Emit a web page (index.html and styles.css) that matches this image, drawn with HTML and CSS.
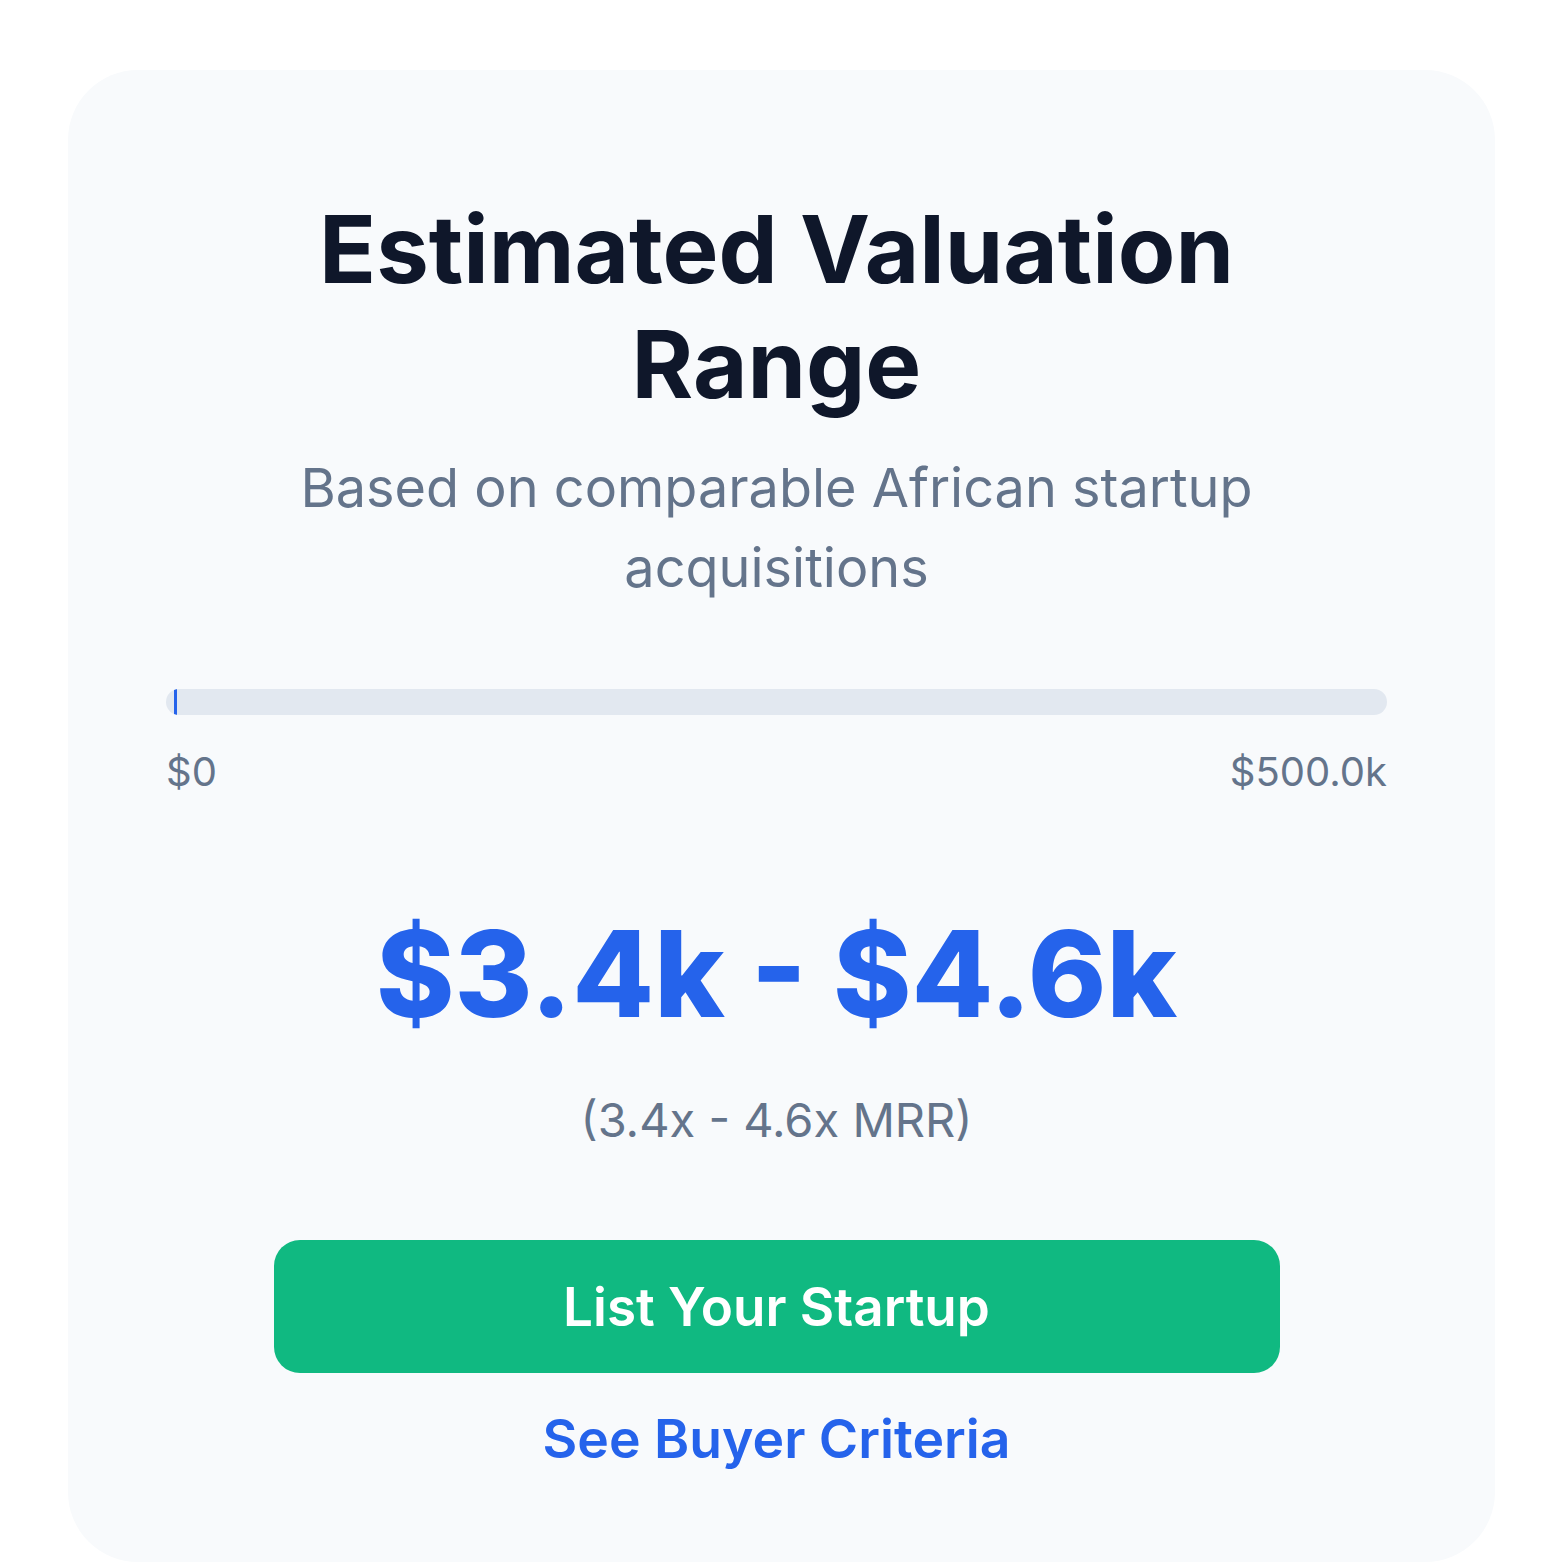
FILE: index.html
```html
<!DOCTYPE html>
<html lang="en">
<head>
  <meta charset="UTF-8" />
  <title>Estimated Valuation</title>
  <link rel="stylesheet" href="styles.css">
</head>
<body>
  <section class="card">
    <h1 class="title">Estimated Valuation Range</h1>
    <p class="subtitle">Based on comparable African startup acquisitions</p>

    <div class="range">
      <div class="bar">
        <!-- fill position comes from min / max valuation -->
        <div class="bar-fill" style="left: 0.68%; width: 0.24%;"></div>
      </div>
      <div class="scale">
        <span>$0</span>
        <span>$500.0k</span>
      </div>
    </div>

    <div class="value">$3.4k - $4.6k</div>
    <div class="multiple">(3.4x - 4.6x MRR)</div>

    <button class="cta" type="button">List Your Startup</button>
    <a class="link" href="#">See Buyer Criteria</a>
  </section>
</body>
</html>
```

FILE: styles.css
```css
body {
  margin: 0;
  padding: 70px 68px 0 68px;
  background-color: #ffffff;
  font-family: Inter, 'Noto Sans', sans-serif;
}
.card {
  background-color: #f8fafc;
  border-radius: 70px;
  padding: 122px 108px 88px 98px;
  text-align: center;
}
.title {
  margin: 0 auto;
  max-width: 1000px;
  font-size: 94px;
  line-height: 115px;
  font-weight: 700;
  color: #0f172a;
}
.subtitle {
  margin: 26px auto 0;
  max-width: 1000px;
  font-size: 54px;
  line-height: 80px;
  color: #64748b;
}
.range {
  margin-top: 81px;
}
.bar {
  position: relative;
  height: 26px;
  background-color: #e2e8f0;
  border-radius: 13px;
  overflow: hidden;
}
.bar-fill {
  position: absolute;
  top: 0;
  bottom: 0;
  background-color: #2563eb;
}
.scale {
  display: flex;
  justify-content: space-between;
  margin-top: 27px;
  font-size: 40px;
  line-height: 60px;
  color: #64748b;
}
.value {
  margin-top: 100px;
  font-size: 119px;
  line-height: 145px;
  font-weight: 800;
  color: #2563eb;
}
.multiple {
  margin-top: 43px;
  font-size: 47px;
  line-height: 60px;
  color: #64748b;
}
.cta {
  display: block;
  width: 1006px;
  height: 133px;
  margin: 90px auto 0;
  border: none;
  border-radius: 26px;
  background-color: #10b981;
  color: #ffffff;
  font-family: inherit;
  font-size: 53px;
  font-weight: 600;
  cursor: pointer;
}
.link {
  display: inline-block;
  margin-top: 31px;
  font-size: 53.5px;
  line-height: 70px;
  font-weight: 600;
  color: #2563eb;
  text-decoration: none;
}
```
